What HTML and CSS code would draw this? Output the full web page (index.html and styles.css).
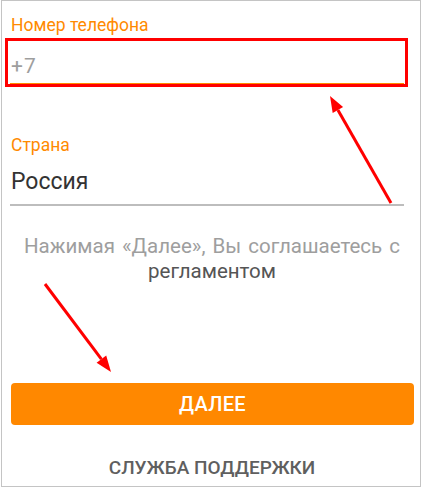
FILE: index.html
```html
<!DOCTYPE html>
<html lang="ru">
<head>
    <meta charset="UTF-8">
    <meta name="viewport" content="width=device-width, initial-scale=1.0">
    <title>Регистрация</title>
    <link rel="stylesheet" href="styles.css">
</head>
<body>
    <div class="page">
        <div class="screen">
            <div class="field phone-field">
                <div class="field-label">Номер телефона</div>
                <div class="field-input active">
                    <span class="placeholder">+7</span>
                </div>
                <div class="highlight"></div>
            </div>

            <div class="field country-field">
                <div class="field-label">Страна</div>
                <div class="field-input">
                    <span class="value">Россия</span>
                </div>
            </div>

            <p class="notice">Нажимая «Далее», Вы соглашаетесь с <a href="#" class="rules">регламентом</a></p>

            <button class="next-btn">ДАЛЕЕ</button>

            <a href="#" class="support">СЛУЖБА ПОДДЕРЖКИ</a>
        </div>

        <!-- annotation arrows -->
        <svg class="arrows" width="423" height="487" viewBox="0 0 423 487">
            <line x1="391" y1="203" x2="337.9" y2="109.9" stroke="#ff0000" stroke-width="3" />
            <polygon points="330,96 343.1,106.9 332.7,112.9" fill="#ff0000" />
            <line x1="45" y1="284" x2="101.4" y2="359.2" stroke="#ff0000" stroke-width="3" />
            <polygon points="111,372 96.6,362.8 106.2,355.6" fill="#ff0000" />
        </svg>
    </div>
</body>
</html>
```

FILE: styles.css
```css
body {
    margin: 0;
    font-family: 'Roboto', 'Liberation Sans', sans-serif;
    background: #ffffff;
}

.page {
    position: relative;
    width: 423px;
    height: 487px;
}

.screen {
    box-sizing: border-box;
    width: 420px;
    height: 487px;
    margin-left: 1px;
    border: 1px solid #c4c4c4;
    padding: 0 6px 0 8px;
    display: flex;
    flex-direction: column;
}

.field {
    position: relative;
    margin-right: 10px;
}

.field-label {
    font-size: 17.5px;
    line-height: 20px;
    color: #ff8a00;
    padding-left: 1px;
}

.phone-field {
    margin-top: 14px;
}

.country-field {
    margin-top: 50px;
}

.field-input {
    border-bottom: 2px solid #bdbdbd;
    padding-left: 1px;
}

.phone-field .field-input {
    padding: 19px 0 5px 1px;
    font-size: 21px;
    line-height: 24px;
    letter-spacing: 1px;
}

.field-input.active {
    border-bottom-color: #ff8a00;
}

.placeholder {
    color: #9e9e9e;
}

.country-field .field-input {
    padding: 14px 0 9px 1px;
    font-size: 23px;
    line-height: 26px;
}

.value {
    color: #333333;
}

.highlight {
    position: absolute;
    left: -5px;
    right: -4px;
    top: 23px;
    height: 49px;
    box-sizing: border-box;
    border: 3px solid #ff0000;
}

.notice {
    margin: 28px 0 0 0;
    text-align: center;
    font-size: 20.5px;
    line-height: 25px;
    word-spacing: 2px;
    color: #9e9e9e;
}

.rules {
    color: #555555;
    text-decoration: none;
}

.next-btn {
    margin-top: 99px;
    margin-left: 1px;
    height: 42px;
    border: none;
    border-radius: 4px;
    background: #ff8800;
    color: #ffffff;
    font-family: 'Roboto', 'Liberation Sans', sans-serif;
    font-size: 20px;
    font-weight: 500;
    letter-spacing: 0.3px;
    cursor: pointer;
}

.support {
    margin-top: 32px;
    text-align: center;
    font-size: 19px;
    line-height: 22px;
    font-weight: 500;
    color: #5f5f5f;
    text-decoration: none;
}

.arrows {
    position: absolute;
    top: 0;
    left: 0;
    pointer-events: none;
}
```
